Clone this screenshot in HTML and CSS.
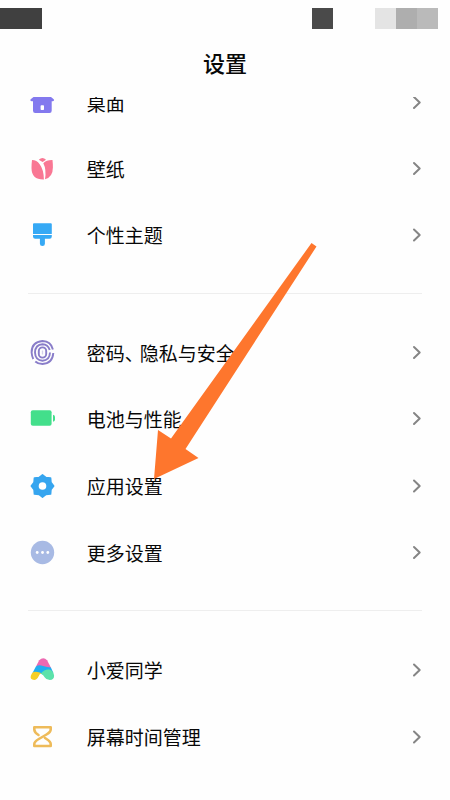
FILE: index.html
```html
<!DOCTYPE html>
<html lang="zh-CN">
<head>
<meta charset="utf-8">
<title>设置</title>
<link rel="stylesheet" href="styles.css">
</head>
<body>
<div class="screen">
  <div class="status">
    <span class="block carrier"></span>
    <span class="block signal"></span>
    <span class="block b1"></span><span class="block b2"></span><span class="block b3"></span>
  </div>
  <header class="title">设置</header>
  <main class="viewport">
    <div class="list">
      <section class="group">
        <div class="row"><svg class="icon" viewBox="0 0 26 26"><path fill="#8379ee" d="M13 1 4.500 7 1.700 9.300q-1 1.500.8 1.900h1.500v9.500q0 2.200 2.200 2.200h14.300q2.200 0 2.200-2.200v-9.500h1.200q1.800-.4.8-1.900L22 7z"/><rect x="11.600" y="15.200" width="3.400" height="4.900" rx=".8" fill="#fff"/></svg><span class="label">桌面</span><svg class="chevron" viewBox="0 0 10 16"><path d="m2 2 5.700 5.500L2 13"/></svg></div>
        <div class="row"><svg class="icon" viewBox="0 0 26 26"><g fill="#f97794"><path d="M9.800 3.700Q13.500.1 17 3.700L13.600 6z"/><path d="M3 4q4.800.2 7.500 3.900 4.300 5.600 4.400 15.600Q2.600 23.800 2.500 12q0-4 .5-8z"/><path d="M23.500 4q-6-.2-9.200 3.300 3.300 6.200 1.700 16 7.900-2.200 7.900-11.800 0-4-.4-7.500z"/></g></svg><span class="label">壁纸</span><svg class="chevron" viewBox="0 0 10 16"><path d="m2 2 5.700 5.500L2 13"/></svg></div>
        <div class="row"><svg class="icon" viewBox="0 0 26 26"><path fill="#36a9f5" d="M4 2.200q0-1 1-1h16.800q1 0 1 1v9.700H4zM4 12.900h18.800v1.600q0 2.200-2.200 2.200h-4.700v5q0 2.300-2.500 2.300t-2.500-2.300v-5H6.200q-2.200 0-2.200-2.200z"/></svg><span class="label">个性主题</span><svg class="chevron" viewBox="0 0 10 16"><path d="m2 2.500 5.700 5.500L2 13.500"/></svg></div>
      </section>
      <section class="group">
        <div class="row"><svg class="icon" viewBox="0 0 26 26"><g fill="none" stroke="#897dc9" stroke-width="1.900"><path d="M23.900 9.500Q22 1.200 13.500 1 2.500 2 2.600 12.500q.3 4 1.700 6.500M24.300 13Q23.500 23.500 13.500 24q-4.500 0-7.200-2.500"/><path d="M20.700 10Q19 4.400 13.500 4.300q-7.200.5-7.500 8.200.3 7.700 7.500 8.200 7.200-.5 7.500-8.200"/><rect x="9.800" y="7.400" width="7.400" height="10.200" rx="3.700"/></g><path d="M13.500 10.500v4" stroke="#897dc9" stroke-width="1.300" stroke-opacity=".35"/></svg><span class="label">密码<span class="comma">、</span>隐私与安全</span><svg class="chevron" viewBox="0 0 10 16"><path d="m2 2 5.700 5.500L2 13"/></svg></div>
        <div class="row"><svg class="icon" viewBox="0 0 26 26"><g fill="#43df8b"><rect x="1.800" y="4.200" width="20.800" height="15.600" rx="2"/><path d="M24 8.700q2 .3 2 2v3q0 1.700-2 2z"/></g></svg><span class="label">电池与性能</span><svg class="chevron" viewBox="0 0 10 16"><path d="m2 2 5.700 5.500L2 13"/></svg></div>
        <div class="row"><svg class="icon" viewBox="0 0 26 26"><path fill="#36a5ef" stroke="#36a5ef" stroke-width="1.500" stroke-linejoin="round" d="m13.500 1.800 3.500 2.800 4.600.3.400 4.600 2.700 3.500-2.700 3.500-.4 4.600-4.600.3-3.500 2.800-3.500-2.800-4.600-.3-.4-4.600L2.300 13 5 9.500l.4-4.600 4.600-.3z"/><circle cx="13.500" cy="13" r="3.800" fill="#fff"/></svg><span class="label">应用设置</span><svg class="chevron" viewBox="0 0 10 16"><path d="m2 2.500 5.700 5.500L2 13.500"/></svg></div>
        <div class="row"><svg class="icon" viewBox="0 0 26 26"><circle cx="13.500" cy="12.500" r="11.700" fill="#a8bae4"/><g fill="#fff"><circle cx="8.200" cy="12.500" r="1.400"/><circle cx="13.500" cy="12.500" r="1.400"/><circle cx="18.800" cy="12.500" r="1.400"/></g></svg><span class="label">更多设置</span><svg class="chevron" viewBox="0 0 10 16"><path d="m2 2 5.700 5.500L2 13"/></svg></div>
      </section>
      <section class="group">
        <div class="row"><svg class="icon" viewBox="0 0 26 26"><path fill="#ed69b1" d="M7 9.500 10.200 3.300q4.100-4.200 7.900 0l4 7.700-6 1z"/><path fill="#20aef0" d="M3.500 16 6.900 9.400q3-2.300 7.200-.4 4 1.400 7.800 1.400l2.500 5.600-8 2.500-5-2z"/><path fill="#5ce2aa" d="M12 16.300q3.500-4.400 8.300-3.800 4.200 1.200 4.800 6.100.1 4.400-4.300 4.400-3.500 0-5.200-2.800-1.400-2.700-3.600-3.500z"/><path fill="#f6cf27" d="M3 16.200q1.700-1.900 5.400-1.200 2.600.5 3.800 1.300-1.500.5-2.700 3.300-1.500 3.400-4.400 3.400-4.300-.4-3.300-4.200z"/></svg><span class="label">小爱同学</span><svg class="chevron" viewBox="0 0 10 16"><path d="m2 2.500 5.700 5.500L2 13.500"/></svg></div>
        <div class="row"><svg class="icon" viewBox="0 0 26 26"><path fill="none" stroke="#eebb5a" stroke-width="2.600" stroke-linejoin="round" stroke-linecap="round" d="M9.500 11Q5.300 8.500 5.300 5.500V3.200h16.400v2.300q0 2.500-4.200 5L9.800 15Q5.300 17.700 5.300 20v2h16.400v-2q0-2.300-4.200-5l-1.500-1"/></svg><span class="label">屏幕时间管理</span><svg class="chevron" viewBox="0 0 10 16"><path d="m2 2.500 5.700 5.500L2 13.500"/></svg></div>
      </section>
    </div>
  </main>
  <svg class="pointer" viewBox="0 0 164 238"><path d="m1 237 4-49 13 8.500L158.500 1l5 3.500L32.500 207l13 9z"/></svg>
</div>
</body>
</html>
```

FILE: styles.css
```css
* { box-sizing: border-box; }
body { margin: 0; background: #fefefe; font-family: "Noto Sans CJK SC", sans-serif; color: #080808; }
.screen { position: relative; width: 450px; height: 800px; overflow: hidden; display: flex; flex-direction: column; }
.status { display: flex; height: 29px; padding-top: 8px; flex: none; }
.block { width: 21px; height: 21px; }
.carrier { width: 42px; background: #404040; }
.signal { margin-left: 270px; background: #4a4a4a; }
.b1 { margin-left: 42px; background: #e4e4e4; }
.b2 { background: #aeaeae; }
.b3 { background: #bababa; }
.title { height: 68px; flex: none; line-height: 67px; text-align: center; font-size: 22px; font-weight: 500; }
.viewport { flex: 1; overflow: hidden; }
.list { margin-top: -27.500px; }
.group { padding: 0 29px; }
.group:first-child .row { height: 66.400px; }
.group + .group { margin-top: 24.300px; padding-top: 26.300px; position: relative; }
.group + .group::before { content: ""; position: absolute; top: 0; left: 28px; right: 28px; height: 1px; background: #eee; }
.row { height: 66.700px; display: flex; align-items: center; }
.icon { width: 26px; height: 26px; flex: none; }
.label { margin-left: 31.800px; flex: 1; font-size: 19px; line-height: 28px; white-space: nowrap; }
.comma { letter-spacing: -4px; }
.chevron { width: 10px; height: 16px; flex: none; margin-right: -1px; fill: none; stroke: #858585; stroke-width: 2; stroke-linecap: round; stroke-linejoin: round; }
.pointer { position: absolute; left: 153px; top: 242px; width: 164px; height: 238px; fill: #fe762d; }
```
